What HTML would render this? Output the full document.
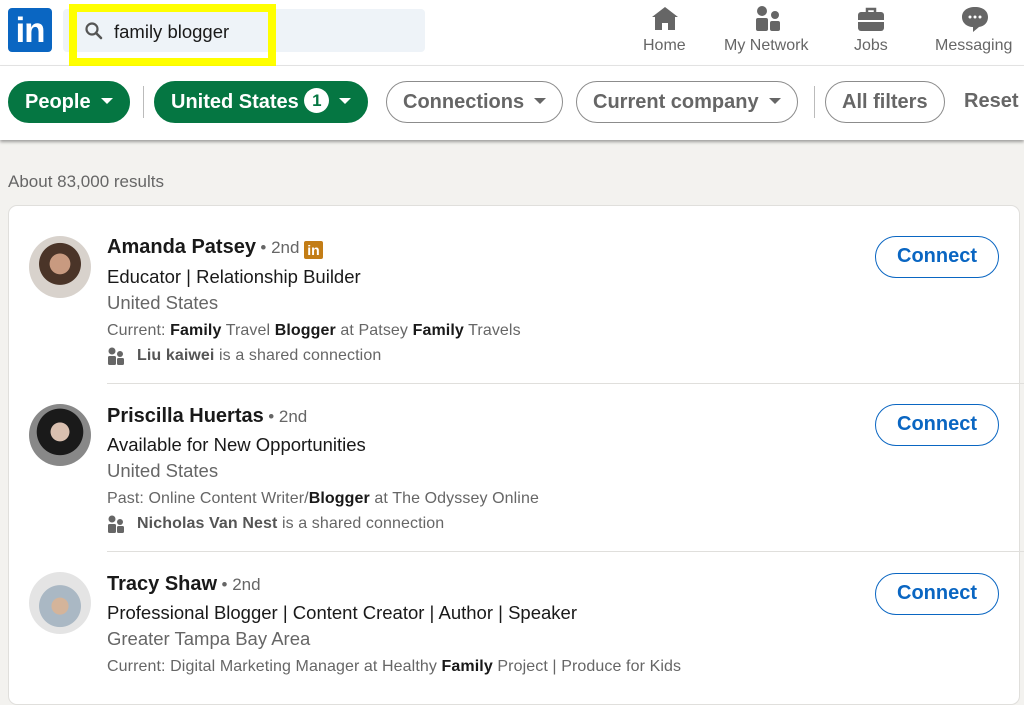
<!DOCTYPE html>
<html><head><style>
*{margin:0;padding:0;box-sizing:border-box}
body{width:1024px;height:677px;overflow:hidden;background:#f3f2ef;font-family:"Liberation Sans",sans-serif;position:relative;color:#191919}
.a{position:absolute;white-space:nowrap}
.hdr{position:absolute;left:0;top:0;width:1024px;height:66px;background:#fff;border-bottom:1px solid #e6e6e6}
.fb{position:absolute;left:0;top:66px;width:1024px;height:74px;background:#fff;box-shadow:0 2px 3px rgba(0,0,0,.35)}
.pill{position:absolute;top:81px;height:42px;border-radius:21px;font-size:20px;font-weight:bold;line-height:40px;padding:0 16px;white-space:nowrap}
.g{background:#057642;color:#fff;border:1px solid #057642}
.o{background:#fff;color:#666;border:1px solid #8c8c8c}
.tri{display:inline-block;width:0;height:0;border-left:6px solid transparent;border-right:6px solid transparent;border-top:6px solid currentColor;vertical-align:middle;margin-left:10px;margin-top:-3px}
.nav{position:absolute;top:37px;font-size:16px;color:#666;text-align:center}
.card{position:absolute;left:8px;top:205px;width:1012px;height:500px;background:#fff;border-radius:9px;border:1px solid #e0dfdc}
.av{position:absolute;left:29px;width:62px;height:62px;border-radius:50%}
.nm{font-size:20px;font-weight:bold;color:#191919}
.deg{font-size:17px;color:#666;font-weight:normal}
.hl{font-size:18.5px;color:#191919}
.loc{font-size:18.5px;color:#666}
.sm{font-size:16px;color:#666;letter-spacing:.1px}
.sm b{color:#191919}
.btn{position:absolute;left:875px;width:124px;height:42px;border:1.5px solid #0a66c2;border-radius:21px;color:#0a66c2;font-size:20px;font-weight:bold;text-align:center;line-height:39px}
.div{position:absolute;left:107px;right:0;height:1px;background:#e0dfdc}
</style></head><body>
<div class="hdr"></div>
<div class="a" style="left:8px;top:8px;width:44px;height:44px;background:#0a66c2;border-radius:4px;color:#fff;font-weight:bold;font-size:35px;line-height:46px;text-align:center;letter-spacing:-1px">in</div>
<div class="a" style="left:63px;top:9px;width:362px;height:43px;background:#eef3f8;border-radius:4px"></div>
<div class="a" style="left:69px;top:4px;width:207px;height:62px;border:8px solid #ffff00"></div>
<svg class="a" style="left:84px;top:21px" width="20" height="20" viewBox="0 0 20 20"><circle cx="8" cy="8" r="5.5" fill="none" stroke="#555" stroke-width="2.2"/><path d="M12 12l5 5" stroke="#555" stroke-width="2.6" stroke-linecap="round"/></svg>
<div class="a" style="left:114px;top:21px;font-size:18.5px;color:#191919">family blogger</div>

<svg class="a" style="left:650px;top:5px" width="30" height="27" viewBox="0 0 30 27"><path d="M15 2L2 12h3v13h7v-7h6v7h7V12h3z" fill="#666"/></svg>
<svg class="a" style="left:755px;top:5px" width="28" height="28" viewBox="0 0 28 28"><circle cx="7" cy="6" r="5" fill="#666"/><circle cx="20" cy="10" r="4" fill="#666"/><rect x="1" y="13" width="12" height="13" rx="2" fill="#666"/><rect x="15" y="16" width="10" height="10" rx="2" fill="#666"/></svg>
<svg class="a" style="left:857px;top:6px" width="28" height="26" viewBox="0 0 28 26"><path d="M10 6V3h8v3" fill="none" stroke="#666" stroke-width="2.5"/><rect x="1" y="6" width="26" height="19" rx="3" fill="#666"/><rect x="1" y="14" width="26" height="2" fill="#fff"/></svg>
<svg class="a" style="left:960px;top:5px" width="30" height="28" viewBox="0 0 30 28"><path d="M15 2C7 2 2 6 2 12s5 10 11 10l0 5 6-5c6-1 9-5 9-10C28 6 23 2 15 2z" fill="#666"/><circle cx="10" cy="12" r="1.5" fill="#fff"/><circle cx="15" cy="12" r="1.5" fill="#fff"/><circle cx="20" cy="12" r="1.5" fill="#fff"/></svg>
<div class="nav" style="left:643px">Home</div>
<div class="nav" style="left:724px">My Network</div>
<div class="nav" style="left:854px">Jobs</div>
<div class="nav" style="left:935px">Messaging</div>

<div class="fb"></div>
<div class="pill g" style="left:8px">People<span class="tri"></span></div>
<div class="a" style="left:143px;top:86px;width:1px;height:32px;background:#bbb"></div>
<div class="pill g" style="left:154px">United States <span style="display:inline-block;width:25px;height:25px;border-radius:50%;background:#fff;color:#057642;font-size:17px;line-height:25px;text-align:center;vertical-align:middle;margin-top:-4px">1</span><span class="tri"></span></div>
<div class="pill o" style="left:386px">Connections<span class="tri"></span></div>
<div class="pill o" style="left:576px">Current company<span class="tri"></span></div>
<div class="a" style="left:814px;top:86px;width:1px;height:32px;background:#bbb"></div>
<div class="pill o" style="left:825px">All filters</div>
<div class="a" style="left:964px;top:90px;font-size:20px;font-weight:bold;color:#666">Reset</div>

<div class="a" style="left:8px;top:172px;font-size:17px;color:#666">About 83,000 results</div>

<div class="card"></div>
<!-- row 1 -->
<div class="av" style="top:236px;background:radial-gradient(circle at 50% 45%,#c89a80 0 22%,#4a3428 23% 45%,#d8d2cc 46%)"></div>
<div class="a" style="left:107px;top:236px"><span class="nm">Amanda Patsey</span> <span class="deg">• 2nd</span> <span style="display:inline-block;width:19px;height:18px;background:#c37d16;color:#fff;font-size:14px;font-weight:bold;line-height:19px;text-align:center;border-radius:2px;vertical-align:-2px">in</span></div>
<div class="a hl" style="left:107px;top:266px">Educator | Relationship Builder</div>
<div class="a loc" style="left:107px;top:292px">United States</div>
<div class="a sm" style="left:107px;top:322px">Current: <b>Family</b> Travel <b>Blogger</b> at Patsey <b>Family</b> Travels</div>
<svg class="a" style="left:107px;top:347px" width="18" height="18" viewBox="0 0 18 18"><circle cx="5" cy="4" r="3.5" fill="#666"/><circle cx="13" cy="7" r="3" fill="#666"/><rect x="1" y="9" width="8" height="9" rx="1.5" fill="#666"/><rect x="10" y="11" width="7" height="7" rx="1.5" fill="#666"/></svg>
<div class="a sm" style="left:137px;top:347px"><b style="color:#555">Liu kaiwei</b> is a shared connection</div>
<div class="btn" style="top:236px">Connect</div>
<div class="div" style="top:383px"></div>
<!-- row 2 -->
<div class="av" style="top:404px;background:radial-gradient(circle at 50% 45%,#d9c0b0 0 20%,#1a1a1a 21% 50%,#888 51%)"></div>
<div class="a" style="left:107px;top:405px"><span class="nm">Priscilla Huertas</span> <span class="deg">• 2nd</span></div>
<div class="a hl" style="left:107px;top:434px">Available for New Opportunities</div>
<div class="a loc" style="left:107px;top:460px">United States</div>
<div class="a sm" style="left:107px;top:490px">Past: Online Content Writer/<b>Blogger</b> at The Odyssey Online</div>
<svg class="a" style="left:107px;top:515px" width="18" height="18" viewBox="0 0 18 18"><circle cx="5" cy="4" r="3.5" fill="#666"/><circle cx="13" cy="7" r="3" fill="#666"/><rect x="1" y="9" width="8" height="9" rx="1.5" fill="#666"/><rect x="10" y="11" width="7" height="7" rx="1.5" fill="#666"/></svg>
<div class="a sm" style="left:137px;top:515px"><b style="color:#555">Nicholas Van Nest</b> is a shared connection</div>
<div class="btn" style="top:404px">Connect</div>
<div class="div" style="top:551px"></div>
<!-- row 3 -->
<div class="av" style="top:572px;background:radial-gradient(circle at 50% 55%,#d4b49a 0 18%,#aab8c4 19% 45%,#e4e4e4 46%)"></div>
<div class="a" style="left:107px;top:573px"><span class="nm">Tracy Shaw</span> <span class="deg">• 2nd</span></div>
<div class="a hl" style="left:107px;top:602px">Professional Blogger | Content Creator | Author | Speaker</div>
<div class="a loc" style="left:107px;top:628px">Greater Tampa Bay Area</div>
<div class="a sm" style="left:107px;top:658px">Current: Digital Marketing Manager at Healthy <b>Family</b> Project | Produce for Kids</div>
<div class="btn" style="top:573px">Connect</div>
</body></html>
